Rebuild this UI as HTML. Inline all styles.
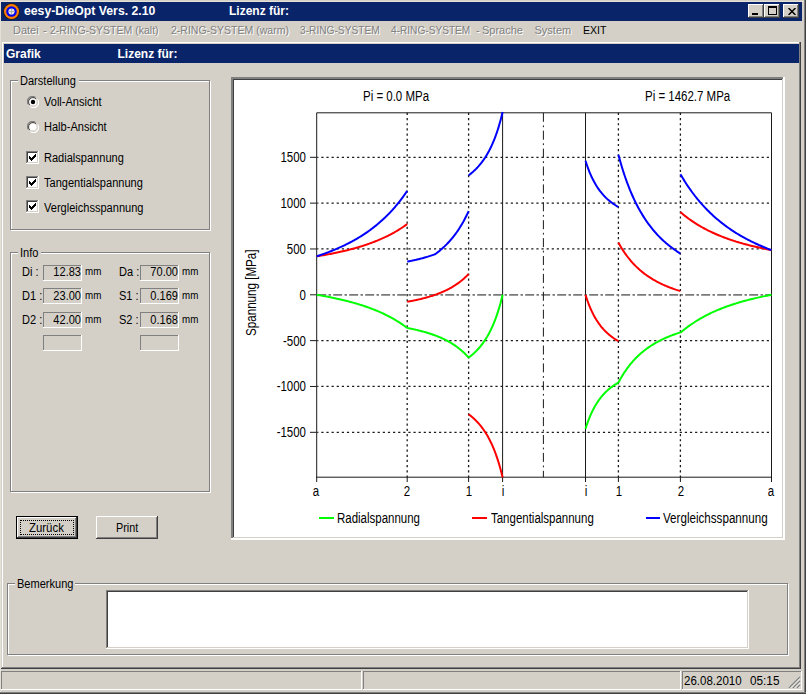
<!DOCTYPE html>
<html><head><meta charset="utf-8"><style>
html,body{margin:0;padding:0;width:806px;height:694px;overflow:hidden;background:#D4D0C8}
body>div,body>svg{position:absolute}
div{white-space:pre;font-family:"Liberation Sans",sans-serif;}
</style></head><body>
<div style="left:0px;top:0px;width:806px;height:694px;background:#D4D0C8;"></div>
<div style="left:0px;top:0px;width:1px;height:694px;background:#E4E1D8;"></div>
<div style="left:0px;top:1px;width:806px;height:1px;background:#E4E1D8;"></div>
<div style="left:804px;top:0px;width:1px;height:694px;background:#808080;"></div>
<div style="left:805px;top:0px;width:1px;height:694px;background:#404040;"></div>
<div style="left:0px;top:692px;width:806px;height:1px;background:#808080;"></div>
<div style="left:0px;top:693px;width:806px;height:1px;background:#404040;"></div>
<div style="left:1px;top:2px;width:801px;height:19px;background:#0A246A;"></div>
<svg style="left:2.5px;top:2.8px;width:17px;height:17px" viewBox="0 0 17 17"><circle cx="8.5" cy="8.5" r="8.2" fill="#2a1a00"/><circle cx="8.5" cy="8.5" r="7.5" fill="#FF8000"/><circle cx="8.5" cy="8.5" r="5.3" fill="#0000F0"/><circle cx="8.5" cy="8.5" r="3.1" fill="#E6E6E6"/><path d="M8.5 6v5M6 8.5h5" stroke="#A8A8A8" stroke-width="0.9"/></svg>
<div style="left:24px;top:5.34px;font-size:12px;line-height:12px;font-weight:bold;color:#fff;transform:scaleX(1.02);transform-origin:0 0;">eesy-DieOpt Vers. 2.10</div>
<div style="left:229px;top:5.34px;font-size:12px;line-height:12px;font-weight:bold;color:#fff;">Lizenz für:</div>
<div style="left:748px;top:4px;width:16px;height:14px;background:#D4D0C8;"></div>
<div style="left:748px;top:4px;width:16px;height:14px;background:#404040;"></div>
<div style="left:748px;top:4px;width:15px;height:13px;background:#FFFFFF;"></div>
<div style="left:749px;top:5px;width:14px;height:12px;background:#808080;"></div>
<div style="left:749px;top:5px;width:13px;height:11px;background:#D4D0C8;"></div>
<div style="left:764px;top:4px;width:16px;height:14px;background:#D4D0C8;"></div>
<div style="left:764px;top:4px;width:16px;height:14px;background:#404040;"></div>
<div style="left:764px;top:4px;width:15px;height:13px;background:#FFFFFF;"></div>
<div style="left:765px;top:5px;width:14px;height:12px;background:#808080;"></div>
<div style="left:765px;top:5px;width:13px;height:11px;background:#D4D0C8;"></div>
<div style="left:783px;top:4px;width:16px;height:14px;background:#D4D0C8;"></div>
<div style="left:783px;top:4px;width:16px;height:14px;background:#404040;"></div>
<div style="left:783px;top:4px;width:15px;height:13px;background:#FFFFFF;"></div>
<div style="left:784px;top:5px;width:14px;height:12px;background:#808080;"></div>
<div style="left:784px;top:5px;width:13px;height:11px;background:#D4D0C8;"></div>
<div style="left:752px;top:13px;width:6px;height:2px;background:#000"></div>
<div style="left:768px;top:6px;width:9px;height:9px;border:1px solid #000;border-top-width:2px;box-sizing:border-box"></div>
<svg style="left:788px;top:8px;width:8px;height:7px" viewBox="0 0 8 7"><path d="M0.5 0 L7.5 7 M7.5 0 L0.5 7" stroke="#000" stroke-width="1.5"/></svg>
<div style="left:14px;top:26.19px;font-size:11px;line-height:11px;color:#FFFFFF;">Datei</div>
<div style="left:13px;top:25.19px;font-size:11px;line-height:11px;color:#808080;">Datei</div>
<div style="left:44px;top:26.19px;font-size:11px;line-height:11px;color:#FFFFFF;">-</div>
<div style="left:43px;top:25.19px;font-size:11px;line-height:11px;color:#808080;">-</div>
<div style="left:50.5px;top:26.19px;font-size:11px;line-height:11px;color:#FFFFFF;transform:scaleX(0.955);transform-origin:0 0;">2-RING-SYSTEM (kalt)</div>
<div style="left:49.5px;top:25.19px;font-size:11px;line-height:11px;color:#808080;transform:scaleX(0.955);transform-origin:0 0;">2-RING-SYSTEM (kalt)</div>
<div style="left:171.5px;top:26.19px;font-size:11px;line-height:11px;color:#FFFFFF;transform:scaleX(0.955);transform-origin:0 0;">2-RING-SYSTEM (warm)</div>
<div style="left:170.5px;top:25.19px;font-size:11px;line-height:11px;color:#808080;transform:scaleX(0.955);transform-origin:0 0;">2-RING-SYSTEM (warm)</div>
<div style="left:300.5px;top:26.19px;font-size:11px;line-height:11px;color:#FFFFFF;transform:scaleX(0.925);transform-origin:0 0;">3-RING-SYSTEM</div>
<div style="left:299.5px;top:25.19px;font-size:11px;line-height:11px;color:#808080;transform:scaleX(0.925);transform-origin:0 0;">3-RING-SYSTEM</div>
<div style="left:392px;top:26.19px;font-size:11px;line-height:11px;color:#FFFFFF;transform:scaleX(0.92);transform-origin:0 0;">4-RING-SYSTEM</div>
<div style="left:391px;top:25.19px;font-size:11px;line-height:11px;color:#808080;transform:scaleX(0.92);transform-origin:0 0;">4-RING-SYSTEM</div>
<div style="left:477px;top:26.19px;font-size:11px;line-height:11px;color:#FFFFFF;">-</div>
<div style="left:476px;top:25.19px;font-size:11px;line-height:11px;color:#808080;">-</div>
<div style="left:483px;top:26.19px;font-size:11px;line-height:11px;color:#FFFFFF;">Sprache</div>
<div style="left:482px;top:25.19px;font-size:11px;line-height:11px;color:#808080;">Sprache</div>
<div style="left:535.5px;top:26.19px;font-size:11px;line-height:11px;color:#FFFFFF;">System</div>
<div style="left:534.5px;top:25.19px;font-size:11px;line-height:11px;color:#808080;">System</div>
<div style="left:583px;top:25.19px;font-size:11px;line-height:11px;color:#000;transform:scaleX(0.96);transform-origin:0 0;">EXIT</div>
<div style="left:2px;top:42px;width:798px;height:1px;background:#FFFFFF;"></div>
<div style="left:2px;top:42px;width:1px;height:626px;background:#FFFFFF;"></div>
<div style="left:799px;top:42px;width:1px;height:626px;background:#808080;"></div>
<div style="left:800px;top:42px;width:1px;height:627px;background:#404040;"></div>
<div style="left:2px;top:667px;width:798px;height:1px;background:#808080;"></div>
<div style="left:1px;top:668px;width:800px;height:1px;background:#404040;"></div>
<div style="left:4px;top:44px;width:795px;height:19px;background:#0A246A;"></div>
<div style="left:6px;top:47.84px;font-size:12px;line-height:12px;font-weight:bold;color:#fff;">Grafik</div>
<div style="left:117.5px;top:47.84px;font-size:12px;line-height:12px;font-weight:bold;color:#fff;">Lizenz für:</div>
<div style="left:10px;top:80px;width:200px;height:150px;background:transparent;border:1px solid #808080;box-sizing:border-box;"></div>
<div style="left:11px;top:81px;width:200px;height:150px;background:transparent;border:1px solid #FFFFFF;box-sizing:border-box;"></div>
<div style="left:10px;top:80px;width:200px;height:1px;background:#808080;"></div>
<div style="left:10px;top:80px;width:1px;height:150px;background:#808080;"></div>
<div style="left:10px;top:229px;width:200px;height:1px;background:#808080;"></div>
<div style="left:209px;top:80px;width:1px;height:150px;background:#808080;"></div>
<div style="left:18px;top:78px;width:61px;height:5px;background:#D4D0C8;"></div>
<div style="left:20px;top:75.34px;font-size:12px;line-height:12px;color:#000;transform:scaleX(0.92);transform-origin:0 0;">Darstellung</div>
<svg style="left:27px;top:96px;width:12px;height:12px" viewBox="0 0 12 12"><path d="M1.5 8.5 A5 5 0 0 1 8.5 1.5" stroke="#808080" stroke-width="1.2" fill="none"/><path d="M2.8 8.9 A4 4 0 0 1 8.9 2.8" stroke="#404040" stroke-width="1" fill="none"/><path d="M10.5 3.5 A5 5 0 0 1 3.5 10.5" stroke="#fff" stroke-width="1.2" fill="none"/><path d="M9.2 3.1 A4 4 0 0 1 3.1 9.2" stroke="#D4D0C8" stroke-width="1" fill="none"/><circle cx="6" cy="6" r="3.6" fill="#fff"/><circle cx="6" cy="6" r="2.2" fill="#000"/></svg>
<div style="left:44px;top:95.84px;font-size:12px;line-height:12px;color:#000;transform:scaleX(0.92);transform-origin:0 0;">Voll-Ansicht</div>
<svg style="left:27px;top:121px;width:12px;height:12px" viewBox="0 0 12 12"><path d="M1.5 8.5 A5 5 0 0 1 8.5 1.5" stroke="#808080" stroke-width="1.2" fill="none"/><path d="M2.8 8.9 A4 4 0 0 1 8.9 2.8" stroke="#404040" stroke-width="1" fill="none"/><path d="M10.5 3.5 A5 5 0 0 1 3.5 10.5" stroke="#fff" stroke-width="1.2" fill="none"/><path d="M9.2 3.1 A4 4 0 0 1 3.1 9.2" stroke="#D4D0C8" stroke-width="1" fill="none"/><circle cx="6" cy="6" r="3.6" fill="#fff"/></svg>
<div style="left:44px;top:120.84px;font-size:12px;line-height:12px;color:#000;transform:scaleX(0.92);transform-origin:0 0;">Halb-Ansicht</div>
<div style="left:26px;top:151px;width:13px;height:13px;background:#FFFFFF;"></div>
<div style="left:26px;top:151px;width:12px;height:1px;background:#808080;"></div>
<div style="left:26px;top:151px;width:1px;height:12px;background:#808080;"></div>
<div style="left:27px;top:152px;width:10px;height:1px;background:#404040;"></div>
<div style="left:27px;top:152px;width:1px;height:10px;background:#404040;"></div>
<div style="left:27px;top:162px;width:11px;height:1px;background:#D4D0C8;"></div>
<div style="left:37px;top:152px;width:1px;height:11px;background:#D4D0C8;"></div>
<svg style="left:29px;top:154px;width:7px;height:7px" viewBox="0 0 7 7" shape-rendering="crispEdges"><rect x="6" y="0" width="1" height="1"/><rect x="5" y="1" width="1" height="1"/><rect x="6" y="1" width="1" height="1"/><rect x="0" y="2" width="1" height="1"/><rect x="4" y="2" width="1" height="1"/><rect x="5" y="2" width="1" height="1"/><rect x="6" y="2" width="1" height="1"/><rect x="0" y="3" width="1" height="1"/><rect x="1" y="3" width="1" height="1"/><rect x="3" y="3" width="1" height="1"/><rect x="4" y="3" width="1" height="1"/><rect x="5" y="3" width="1" height="1"/><rect x="0" y="4" width="1" height="1"/><rect x="1" y="4" width="1" height="1"/><rect x="2" y="4" width="1" height="1"/><rect x="3" y="4" width="1" height="1"/><rect x="4" y="4" width="1" height="1"/><rect x="1" y="5" width="1" height="1"/><rect x="2" y="5" width="1" height="1"/><rect x="3" y="5" width="1" height="1"/><rect x="2" y="6" width="1" height="1"/></svg>
<div style="left:44px;top:151.84px;font-size:12px;line-height:12px;color:#000;transform:scaleX(0.92);transform-origin:0 0;">Radialspannung</div>
<div style="left:26px;top:176px;width:13px;height:13px;background:#FFFFFF;"></div>
<div style="left:26px;top:176px;width:12px;height:1px;background:#808080;"></div>
<div style="left:26px;top:176px;width:1px;height:12px;background:#808080;"></div>
<div style="left:27px;top:177px;width:10px;height:1px;background:#404040;"></div>
<div style="left:27px;top:177px;width:1px;height:10px;background:#404040;"></div>
<div style="left:27px;top:187px;width:11px;height:1px;background:#D4D0C8;"></div>
<div style="left:37px;top:177px;width:1px;height:11px;background:#D4D0C8;"></div>
<svg style="left:29px;top:179px;width:7px;height:7px" viewBox="0 0 7 7" shape-rendering="crispEdges"><rect x="6" y="0" width="1" height="1"/><rect x="5" y="1" width="1" height="1"/><rect x="6" y="1" width="1" height="1"/><rect x="0" y="2" width="1" height="1"/><rect x="4" y="2" width="1" height="1"/><rect x="5" y="2" width="1" height="1"/><rect x="6" y="2" width="1" height="1"/><rect x="0" y="3" width="1" height="1"/><rect x="1" y="3" width="1" height="1"/><rect x="3" y="3" width="1" height="1"/><rect x="4" y="3" width="1" height="1"/><rect x="5" y="3" width="1" height="1"/><rect x="0" y="4" width="1" height="1"/><rect x="1" y="4" width="1" height="1"/><rect x="2" y="4" width="1" height="1"/><rect x="3" y="4" width="1" height="1"/><rect x="4" y="4" width="1" height="1"/><rect x="1" y="5" width="1" height="1"/><rect x="2" y="5" width="1" height="1"/><rect x="3" y="5" width="1" height="1"/><rect x="2" y="6" width="1" height="1"/></svg>
<div style="left:44px;top:176.84px;font-size:12px;line-height:12px;color:#000;transform:scaleX(0.92);transform-origin:0 0;">Tangentialspannung</div>
<div style="left:26px;top:200px;width:13px;height:13px;background:#FFFFFF;"></div>
<div style="left:26px;top:200px;width:12px;height:1px;background:#808080;"></div>
<div style="left:26px;top:200px;width:1px;height:12px;background:#808080;"></div>
<div style="left:27px;top:201px;width:10px;height:1px;background:#404040;"></div>
<div style="left:27px;top:201px;width:1px;height:10px;background:#404040;"></div>
<div style="left:27px;top:211px;width:11px;height:1px;background:#D4D0C8;"></div>
<div style="left:37px;top:201px;width:1px;height:11px;background:#D4D0C8;"></div>
<svg style="left:29px;top:203px;width:7px;height:7px" viewBox="0 0 7 7" shape-rendering="crispEdges"><rect x="6" y="0" width="1" height="1"/><rect x="5" y="1" width="1" height="1"/><rect x="6" y="1" width="1" height="1"/><rect x="0" y="2" width="1" height="1"/><rect x="4" y="2" width="1" height="1"/><rect x="5" y="2" width="1" height="1"/><rect x="6" y="2" width="1" height="1"/><rect x="0" y="3" width="1" height="1"/><rect x="1" y="3" width="1" height="1"/><rect x="3" y="3" width="1" height="1"/><rect x="4" y="3" width="1" height="1"/><rect x="5" y="3" width="1" height="1"/><rect x="0" y="4" width="1" height="1"/><rect x="1" y="4" width="1" height="1"/><rect x="2" y="4" width="1" height="1"/><rect x="3" y="4" width="1" height="1"/><rect x="4" y="4" width="1" height="1"/><rect x="1" y="5" width="1" height="1"/><rect x="2" y="5" width="1" height="1"/><rect x="3" y="5" width="1" height="1"/><rect x="2" y="6" width="1" height="1"/></svg>
<div style="left:44px;top:201.84px;font-size:12px;line-height:12px;color:#000;transform:scaleX(0.92);transform-origin:0 0;">Vergleichsspannung</div>
<div style="left:10px;top:252px;width:200px;height:240px;background:transparent;border:1px solid #808080;box-sizing:border-box;"></div>
<div style="left:11px;top:253px;width:200px;height:240px;background:transparent;border:1px solid #FFFFFF;box-sizing:border-box;"></div>
<div style="left:10px;top:252px;width:200px;height:1px;background:#808080;"></div>
<div style="left:10px;top:252px;width:1px;height:240px;background:#808080;"></div>
<div style="left:10px;top:491px;width:200px;height:1px;background:#808080;"></div>
<div style="left:209px;top:252px;width:1px;height:240px;background:#808080;"></div>
<div style="left:18px;top:250px;width:23px;height:5px;background:#D4D0C8;"></div>
<div style="left:20px;top:247.34px;font-size:12px;line-height:12px;color:#000;transform:scaleX(0.92);transform-origin:0 0;">Info</div>
<div style="left:22px;top:265.74px;font-size:12px;line-height:12px;color:#000;transform:scaleX(0.92);transform-origin:0 0;">Di :</div>
<div style="left:43px;top:265px;width:39px;height:1px;background:#808080;"></div>
<div style="left:43px;top:265px;width:1px;height:16px;background:#808080;"></div>
<div style="left:43px;top:280px;width:39px;height:1px;background:#FFFFFF;"></div>
<div style="left:81px;top:265px;width:1px;height:16px;background:#FFFFFF;"></div>
<div style="left:-219px;width:300px;text-align:right;top:265.74px;font-size:12px;line-height:12px;color:#000;transform:scaleX(0.92);transform-origin:100% 0">12.83</div>
<div style="left:84.5px;top:266.17px;font-size:11.5px;line-height:11.5px;color:#000;transform:scaleX(0.85);transform-origin:0 0;">mm</div>
<div style="left:118.5px;top:265.74px;font-size:12px;line-height:12px;color:#000;transform:scaleX(0.92);transform-origin:0 0;">Da :</div>
<div style="left:140px;top:265px;width:39px;height:1px;background:#808080;"></div>
<div style="left:140px;top:265px;width:1px;height:16px;background:#808080;"></div>
<div style="left:140px;top:280px;width:39px;height:1px;background:#FFFFFF;"></div>
<div style="left:178px;top:265px;width:1px;height:16px;background:#FFFFFF;"></div>
<div style="left:-122px;width:300px;text-align:right;top:265.74px;font-size:12px;line-height:12px;color:#000;transform:scaleX(0.92);transform-origin:100% 0">70.00</div>
<div style="left:182px;top:266.17px;font-size:11.5px;line-height:11.5px;color:#000;transform:scaleX(0.85);transform-origin:0 0;">mm</div>
<div style="left:22px;top:290.04px;font-size:12px;line-height:12px;color:#000;transform:scaleX(0.92);transform-origin:0 0;">D1 :</div>
<div style="left:43px;top:288px;width:39px;height:1px;background:#808080;"></div>
<div style="left:43px;top:288px;width:1px;height:16px;background:#808080;"></div>
<div style="left:43px;top:303px;width:39px;height:1px;background:#FFFFFF;"></div>
<div style="left:81px;top:288px;width:1px;height:16px;background:#FFFFFF;"></div>
<div style="left:-219px;width:300px;text-align:right;top:290.04px;font-size:12px;line-height:12px;color:#000;transform:scaleX(0.92);transform-origin:100% 0">23.00</div>
<div style="left:84.5px;top:290.47px;font-size:11.5px;line-height:11.5px;color:#000;transform:scaleX(0.85);transform-origin:0 0;">mm</div>
<div style="left:118.5px;top:290.04px;font-size:12px;line-height:12px;color:#000;transform:scaleX(0.92);transform-origin:0 0;">S1 :</div>
<div style="left:140px;top:288px;width:39px;height:1px;background:#808080;"></div>
<div style="left:140px;top:288px;width:1px;height:16px;background:#808080;"></div>
<div style="left:140px;top:303px;width:39px;height:1px;background:#FFFFFF;"></div>
<div style="left:178px;top:288px;width:1px;height:16px;background:#FFFFFF;"></div>
<div style="left:-122px;width:300px;text-align:right;top:290.04px;font-size:12px;line-height:12px;color:#000;transform:scaleX(0.92);transform-origin:100% 0">0.169</div>
<div style="left:182px;top:290.47px;font-size:11.5px;line-height:11.5px;color:#000;transform:scaleX(0.85);transform-origin:0 0;">mm</div>
<div style="left:22px;top:313.64px;font-size:12px;line-height:12px;color:#000;transform:scaleX(0.92);transform-origin:0 0;">D2 :</div>
<div style="left:43px;top:312px;width:39px;height:1px;background:#808080;"></div>
<div style="left:43px;top:312px;width:1px;height:16px;background:#808080;"></div>
<div style="left:43px;top:327px;width:39px;height:1px;background:#FFFFFF;"></div>
<div style="left:81px;top:312px;width:1px;height:16px;background:#FFFFFF;"></div>
<div style="left:-219px;width:300px;text-align:right;top:313.64px;font-size:12px;line-height:12px;color:#000;transform:scaleX(0.92);transform-origin:100% 0">42.00</div>
<div style="left:84.5px;top:314.07px;font-size:11.5px;line-height:11.5px;color:#000;transform:scaleX(0.85);transform-origin:0 0;">mm</div>
<div style="left:118.5px;top:313.64px;font-size:12px;line-height:12px;color:#000;transform:scaleX(0.92);transform-origin:0 0;">S2 :</div>
<div style="left:140px;top:312px;width:39px;height:1px;background:#808080;"></div>
<div style="left:140px;top:312px;width:1px;height:16px;background:#808080;"></div>
<div style="left:140px;top:327px;width:39px;height:1px;background:#FFFFFF;"></div>
<div style="left:178px;top:312px;width:1px;height:16px;background:#FFFFFF;"></div>
<div style="left:-122px;width:300px;text-align:right;top:313.64px;font-size:12px;line-height:12px;color:#000;transform:scaleX(0.92);transform-origin:100% 0">0.168</div>
<div style="left:182px;top:314.07px;font-size:11.5px;line-height:11.5px;color:#000;transform:scaleX(0.85);transform-origin:0 0;">mm</div>
<div style="left:43px;top:335px;width:39px;height:1px;background:#808080;"></div>
<div style="left:43px;top:335px;width:1px;height:16px;background:#808080;"></div>
<div style="left:43px;top:350px;width:39px;height:1px;background:#FFFFFF;"></div>
<div style="left:81px;top:335px;width:1px;height:16px;background:#FFFFFF;"></div>
<div style="left:140px;top:335px;width:39px;height:1px;background:#808080;"></div>
<div style="left:140px;top:335px;width:1px;height:16px;background:#808080;"></div>
<div style="left:140px;top:350px;width:39px;height:1px;background:#FFFFFF;"></div>
<div style="left:178px;top:335px;width:1px;height:16px;background:#FFFFFF;"></div>
<div style="left:16px;top:516px;width:62px;height:23px;background:#D4D0C8;"></div>
<div style="left:16px;top:516px;width:62px;height:23px;background:#000;"></div>
<div style="left:17px;top:517px;width:60px;height:21px;background:#404040;"></div>
<div style="left:17px;top:517px;width:59px;height:20px;background:#FFFFFF;"></div>
<div style="left:18px;top:518px;width:58px;height:19px;background:#808080;"></div>
<div style="left:18px;top:518px;width:57px;height:18px;background:#D4D0C8;"></div>
<div style="left:20px;top:520px;width:54px;height:15px;border:1px dotted #000;box-sizing:border-box"></div>
<div style="left:29px;top:521.54px;font-size:12px;line-height:12px;color:#000;transform:scaleX(0.95);transform-origin:0 0;">Zurück</div>
<div style="left:96px;top:516px;width:62px;height:23px;background:#D4D0C8;"></div>
<div style="left:96px;top:516px;width:62px;height:23px;background:#404040;"></div>
<div style="left:96px;top:516px;width:61px;height:22px;background:#FFFFFF;"></div>
<div style="left:97px;top:517px;width:60px;height:21px;background:#808080;"></div>
<div style="left:97px;top:517px;width:59px;height:20px;background:#D4D0C8;"></div>
<div style="left:116.3px;top:521.54px;font-size:12px;line-height:12px;color:#000;transform:scaleX(0.9);transform-origin:0 0;">Print</div>
<div style="left:7px;top:583px;width:781px;height:72px;background:transparent;border:1px solid #808080;box-sizing:border-box;"></div>
<div style="left:8px;top:584px;width:781px;height:72px;background:transparent;border:1px solid #FFFFFF;box-sizing:border-box;"></div>
<div style="left:7px;top:583px;width:781px;height:1px;background:#808080;"></div>
<div style="left:7px;top:583px;width:1px;height:72px;background:#808080;"></div>
<div style="left:7px;top:654px;width:781px;height:1px;background:#808080;"></div>
<div style="left:787px;top:583px;width:1px;height:72px;background:#808080;"></div>
<div style="left:15px;top:581px;width:60px;height:5px;background:#D4D0C8;"></div>
<div style="left:17px;top:577.64px;font-size:12px;line-height:12px;color:#000;transform:scaleX(0.92);transform-origin:0 0;">Bemerkung</div>
<div style="left:106px;top:590px;width:643px;height:59px;background:#FFFFFF;"></div>
<div style="left:106px;top:590px;width:643px;height:1px;background:#808080;"></div>
<div style="left:106px;top:590px;width:1px;height:59px;background:#808080;"></div>
<div style="left:106px;top:648px;width:643px;height:1px;background:#FFFFFF;"></div>
<div style="left:748px;top:590px;width:1px;height:59px;background:#FFFFFF;"></div>
<div style="left:107px;top:591px;width:641px;height:1px;background:#404040;"></div>
<div style="left:107px;top:591px;width:1px;height:57px;background:#404040;"></div>
<div style="left:107px;top:647px;width:641px;height:1px;background:#D4D0C8;"></div>
<div style="left:747px;top:591px;width:1px;height:57px;background:#D4D0C8;"></div>
<div style="left:1px;top:671px;width:361px;height:1px;background:#808080;"></div>
<div style="left:1px;top:671px;width:1px;height:19px;background:#808080;"></div>
<div style="left:1px;top:689px;width:361px;height:1px;background:#FFFFFF;"></div>
<div style="left:361px;top:671px;width:1px;height:19px;background:#FFFFFF;"></div>
<div style="left:363px;top:671px;width:318px;height:1px;background:#808080;"></div>
<div style="left:363px;top:671px;width:1px;height:19px;background:#808080;"></div>
<div style="left:363px;top:689px;width:318px;height:1px;background:#FFFFFF;"></div>
<div style="left:680px;top:671px;width:1px;height:19px;background:#FFFFFF;"></div>
<div style="left:682px;top:671px;width:120px;height:1px;background:#808080;"></div>
<div style="left:682px;top:671px;width:1px;height:19px;background:#808080;"></div>
<div style="left:682px;top:689px;width:120px;height:1px;background:#FFFFFF;"></div>
<div style="left:801px;top:671px;width:1px;height:19px;background:#FFFFFF;"></div>
<div style="left:683.5px;top:675.04px;font-size:12px;line-height:12px;color:#000;transform:scaleX(0.96);transform-origin:0 0;">26.08.2010</div>
<div style="left:749.5px;top:675.04px;font-size:12px;line-height:12px;color:#000;transform:scaleX(0.98);transform-origin:0 0;">05:15</div>
<svg style="left:788px;top:676px;width:13px;height:13px" viewBox="0 0 13 13"><path d="M12 1 L1 12 M12 5 L5 12 M12 9 L9 12" stroke="#808080" stroke-width="1.4"/><path d="M12.5 2 L2 12.5 M12.5 6 L6 12.5 M12.5 10 L10 12.5" stroke="#fff" stroke-width="0.8"/></svg>
<div style="left:231px;top:77px;width:554px;height:463px;background:#FFFFFF;"></div>
<div style="left:231px;top:77px;width:554px;height:2px;background:#808080;"></div>
<div style="left:231px;top:77px;width:2px;height:463px;background:#808080;"></div>
<div style="left:231px;top:538px;width:554px;height:2px;background:#FFFFFF;"></div>
<div style="left:783px;top:77px;width:2px;height:463px;background:#FFFFFF;"></div>
<div style="left:232px;top:538px;width:553px;height:1px;background:#FFFFFF;"></div>
<div style="left:233px;top:79px;width:550px;height:1px;background:#404040;"></div>
<div style="left:233px;top:79px;width:1px;height:459px;background:#404040;"></div>
<div style="left:233px;top:537px;width:550px;height:1px;background:#D4D0C8;"></div>
<div style="left:782px;top:79px;width:1px;height:459px;background:#D4D0C8;"></div>
<svg style="left:0;top:0;width:806px;height:694px" viewBox="0 0 806 694">
<g stroke="#1a1a1a" stroke-width="1" fill="none">
<path d="M317.2 157.30H771" stroke-width="1.3" stroke-dasharray="2.2 2.92" stroke-dashoffset="1"/>
<path d="M310 157.30H316.7"/>
<path d="M317.2 203.13H771" stroke-width="1.3" stroke-dasharray="2.2 2.92" stroke-dashoffset="1"/>
<path d="M310 203.13H316.7"/>
<path d="M317.2 248.97H771" stroke-width="1.3" stroke-dasharray="2.2 2.92" stroke-dashoffset="1"/>
<path d="M310 248.97H316.7"/>
<path d="M317.2 340.63H771" stroke-width="1.3" stroke-dasharray="2.2 2.92" stroke-dashoffset="1"/>
<path d="M310 340.63H316.7"/>
<path d="M317.2 386.47H771" stroke-width="1.3" stroke-dasharray="2.2 2.92" stroke-dashoffset="1"/>
<path d="M310 386.47H316.7"/>
<path d="M317.2 432.31H771" stroke-width="1.3" stroke-dasharray="2.2 2.92" stroke-dashoffset="1"/>
<path d="M310 432.31H316.7"/>
<path d="M407.2 112.8V477.2" stroke-width="1.3" stroke-dasharray="2.2 2.98"/>
<path d="M407.2 477.2V482"/>
<path d="M468.6 112.8V477.2" stroke-width="1.3" stroke-dasharray="2.2 2.98"/>
<path d="M468.6 477.2V482"/>
<path d="M618.4 112.8V477.2" stroke-width="1.3" stroke-dasharray="2.2 2.98"/>
<path d="M618.4 477.2V482"/>
<path d="M680.4 112.8V477.2" stroke-width="1.3" stroke-dasharray="2.2 2.98"/>
<path d="M680.4 477.2V482"/>
<path d="M317.2 294.80H771" stroke="#7a7a7a" stroke-width="1.8" stroke-dasharray="9 2.3 2.5 2.2"/>
<path d="M310 294.80H316.7"/>
<path d="M543.4 112.8V477.2" stroke-dasharray="9 3.6 1.8 3.5"/>
<path d="M316.7 482V112.8H771.5V482M316.2 477.2H772"/>
<path d="M502.6 112.8V482M585.5 112.8V482"/>
</g>
<path d="M502.60 294.80 L502.18 296.58 L501.75 298.31 L501.33 299.99 L500.90 301.62 L500.48 303.20 L500.05 304.74 L499.62 306.24 L499.20 307.70 L498.78 309.12 L498.35 310.50 L497.93 311.84 L497.50 313.15 L497.08 314.42 L496.65 315.66 L496.23 316.87 L495.80 318.04 L495.38 319.19 L494.95 320.31 L494.53 321.40 L494.10 322.46 L493.68 323.50 L493.25 324.51 L492.83 325.50 L492.40 326.46 L491.98 327.40 L491.55 328.32 L491.12 329.22 L490.70 330.10 L490.28 330.95 L489.85 331.79 L489.43 332.61 L489.00 333.41 L488.58 334.19 L488.15 334.95 L487.73 335.70 L487.30 336.43 L486.88 337.15 L486.45 337.85 L486.03 338.53 L485.60 339.21 L485.18 339.86 L484.75 340.50 L484.33 341.13 L483.90 341.75 L483.48 342.35 L483.05 342.95 L482.62 343.53 L482.20 344.09 L481.78 344.65 L481.35 345.20 L480.93 345.73 L480.50 346.26 L480.08 346.77 L479.65 347.27 L479.23 347.77 L478.80 348.25 L478.38 348.73 L477.95 349.20 L477.53 349.66 L477.10 350.10 L476.68 350.55 L476.25 350.98 L475.83 351.41 L475.40 351.82 L474.98 352.23 L474.55 352.64 L474.12 353.03 L473.70 353.42 L473.28 353.80 L472.85 354.18 L472.43 354.55 L472.00 354.91 L471.58 355.26 L471.15 355.61 L470.73 355.96 L470.30 356.30 L469.88 356.63 L469.45 356.96 L469.03 357.28 L468.60 357.59" stroke="#00FF00" stroke-width="2" fill="none" stroke-linejoin="round"/>
<path d="M468.60 357.59 L467.83 356.73 L467.06 355.90 L466.30 355.09 L465.53 354.31 L464.76 353.54 L464.00 352.80 L463.23 352.08 L462.46 351.39 L461.69 350.71 L460.93 350.05 L460.16 349.41 L459.39 348.78 L458.62 348.18 L457.86 347.59 L457.09 347.01 L456.32 346.45 L455.55 345.91 L454.79 345.38 L454.02 344.86 L453.25 344.35 L452.48 343.86 L451.72 343.39 L450.95 342.92 L450.18 342.46 L449.41 342.02 L448.64 341.59 L447.88 341.16 L447.11 340.75 L446.34 340.35 L445.57 339.95 L444.81 339.57 L444.04 339.19 L443.27 338.83 L442.50 338.47 L441.74 338.12 L440.97 337.78 L440.20 337.44 L439.44 337.12 L438.67 336.80 L437.90 336.48 L437.13 336.18 L436.37 335.88 L435.60 335.58 L434.83 335.30 L434.06 335.02 L433.30 334.74 L432.53 334.47 L431.76 334.21 L430.99 333.95 L430.23 333.70 L429.46 333.45 L428.69 333.21 L427.92 332.97 L427.15 332.73 L426.39 332.50 L425.62 332.28 L424.85 332.06 L424.08 331.84 L423.32 331.63 L422.55 331.43 L421.78 331.22 L421.01 331.02 L420.25 330.83 L419.48 330.63 L418.71 330.44 L417.94 330.26 L417.18 330.08 L416.41 329.90 L415.64 329.72 L414.88 329.55 L414.11 329.38 L413.34 329.21 L412.57 329.05 L411.81 328.89 L411.04 328.73 L410.27 328.58 L409.50 328.43 L408.74 328.28 L407.97 328.13 L407.20 327.98" stroke="#00FF00" stroke-width="2" fill="none" stroke-linejoin="round"/>
<path d="M407.20 327.98 L406.07 327.13 L404.94 326.30 L403.81 325.49 L402.68 324.69 L401.54 323.92 L400.41 323.16 L399.28 322.43 L398.15 321.71 L397.02 321.00 L395.89 320.31 L394.76 319.64 L393.62 318.99 L392.49 318.34 L391.36 317.72 L390.23 317.10 L389.10 316.50 L387.97 315.91 L386.84 315.34 L385.71 314.78 L384.57 314.23 L383.44 313.69 L382.31 313.16 L381.18 312.65 L380.05 312.14 L378.92 311.65 L377.79 311.16 L376.66 310.69 L375.52 310.22 L374.39 309.77 L373.26 309.32 L372.13 308.88 L371.00 308.45 L369.87 308.03 L368.74 307.62 L367.61 307.21 L366.47 306.81 L365.34 306.43 L364.21 306.04 L363.08 305.67 L361.95 305.30 L360.82 304.94 L359.69 304.58 L358.56 304.24 L357.43 303.89 L356.29 303.56 L355.16 303.23 L354.03 302.91 L352.90 302.59 L351.77 302.28 L350.64 301.97 L349.51 301.67 L348.38 301.37 L347.24 301.08 L346.11 300.80 L344.98 300.51 L343.85 300.24 L342.72 299.97 L341.59 299.70 L340.46 299.44 L339.32 299.18 L338.19 298.92 L337.06 298.67 L335.93 298.43 L334.80 298.19 L333.67 297.95 L332.54 297.72 L331.41 297.49 L330.27 297.26 L329.14 297.04 L328.01 296.82 L326.88 296.60 L325.75 296.39 L324.62 296.18 L323.49 295.97 L322.36 295.77 L321.23 295.57 L320.09 295.37 L318.96 295.18 L317.83 294.99 L316.70 294.80" stroke="#00FF00" stroke-width="2" fill="none" stroke-linejoin="round"/>
<path d="M502.60 477.59 L502.18 475.79 L501.75 474.05 L501.33 472.36 L500.90 470.71 L500.48 469.11 L500.05 467.56 L499.62 466.05 L499.20 464.58 L498.78 463.15 L498.35 461.76 L497.93 460.40 L497.50 459.08 L497.08 457.80 L496.65 456.55 L496.23 455.33 L495.80 454.14 L495.38 452.99 L494.95 451.86 L494.53 450.76 L494.10 449.69 L493.68 448.64 L493.25 447.62 L492.83 446.62 L492.40 445.65 L491.98 444.70 L491.55 443.77 L491.12 442.87 L490.70 441.98 L490.28 441.12 L489.85 440.28 L489.43 439.45 L489.00 438.64 L488.58 437.85 L488.15 437.08 L487.73 436.33 L487.30 435.59 L486.88 434.87 L486.45 434.16 L486.03 433.47 L485.60 432.80 L485.18 432.13 L484.75 431.48 L484.33 430.85 L483.90 430.23 L483.48 429.62 L483.05 429.02 L482.62 428.44 L482.20 427.86 L481.78 427.30 L481.35 426.75 L480.93 426.21 L480.50 425.68 L480.08 425.17 L479.65 424.66 L479.23 424.16 L478.80 423.67 L478.38 423.19 L477.95 422.72 L477.53 422.25 L477.10 421.80 L476.68 421.36 L476.25 420.92 L475.83 420.49 L475.40 420.07 L474.98 419.65 L474.55 419.25 L474.12 418.85 L473.70 418.46 L473.28 418.07 L472.85 417.69 L472.43 417.32 L472.00 416.95 L471.58 416.60 L471.15 416.24 L470.73 415.90 L470.30 415.55 L469.88 415.22 L469.45 414.89 L469.03 414.56 L468.60 414.25" stroke="#FF0000" stroke-width="2" fill="none" stroke-linejoin="round"/>
<path d="M468.60 273.99 L467.83 274.80 L467.06 275.58 L466.30 276.34 L465.53 277.08 L464.76 277.79 L464.00 278.49 L463.23 279.16 L462.46 279.81 L461.69 280.45 L460.93 281.07 L460.16 281.67 L459.39 282.26 L458.62 282.83 L457.86 283.38 L457.09 283.92 L456.32 284.44 L455.55 284.96 L454.79 285.45 L454.02 285.94 L453.25 286.41 L452.48 286.87 L451.72 287.32 L450.95 287.76 L450.18 288.18 L449.41 288.60 L448.64 289.01 L447.88 289.40 L447.11 289.79 L446.34 290.17 L445.57 290.54 L444.81 290.90 L444.04 291.25 L443.27 291.59 L442.50 291.93 L441.74 292.26 L440.97 292.58 L440.20 292.89 L439.44 293.20 L438.67 293.50 L437.90 293.79 L437.13 294.08 L436.37 294.36 L435.60 294.64 L434.83 294.91 L434.06 295.17 L433.30 295.43 L432.53 295.68 L431.76 295.93 L430.99 296.17 L430.23 296.41 L429.46 296.64 L428.69 296.87 L427.92 297.09 L427.15 297.31 L426.39 297.53 L425.62 297.74 L424.85 297.94 L424.08 298.15 L423.32 298.34 L422.55 298.54 L421.78 298.73 L421.01 298.92 L420.25 299.10 L419.48 299.28 L418.71 299.46 L417.94 299.63 L417.18 299.80 L416.41 299.97 L415.64 300.14 L414.88 300.30 L414.11 300.46 L413.34 300.61 L412.57 300.77 L411.81 300.92 L411.04 301.06 L410.27 301.21 L409.50 301.35 L408.74 301.49 L407.97 301.63 L407.20 301.77" stroke="#FF0000" stroke-width="2" fill="none" stroke-linejoin="round"/>
<path d="M407.20 224.03 L406.07 224.86 L404.94 225.67 L403.81 226.46 L402.68 227.23 L401.54 227.98 L400.41 228.72 L399.28 229.44 L398.15 230.14 L397.02 230.82 L395.89 231.49 L394.76 232.14 L393.62 232.78 L392.49 233.41 L391.36 234.02 L390.23 234.61 L389.10 235.20 L387.97 235.77 L386.84 236.33 L385.71 236.87 L384.57 237.41 L383.44 237.93 L382.31 238.44 L381.18 238.95 L380.05 239.44 L378.92 239.92 L377.79 240.39 L376.66 240.85 L375.52 241.30 L374.39 241.75 L373.26 242.18 L372.13 242.61 L371.00 243.02 L369.87 243.43 L368.74 243.84 L367.61 244.23 L366.47 244.62 L365.34 244.99 L364.21 245.37 L363.08 245.73 L361.95 246.09 L360.82 246.44 L359.69 246.78 L358.56 247.12 L357.43 247.46 L356.29 247.78 L355.16 248.10 L354.03 248.42 L352.90 248.73 L351.77 249.03 L350.64 249.33 L349.51 249.62 L348.38 249.91 L347.24 250.19 L346.11 250.47 L344.98 250.74 L343.85 251.01 L342.72 251.27 L341.59 251.53 L340.46 251.79 L339.32 252.04 L338.19 252.29 L337.06 252.53 L335.93 252.77 L334.80 253.00 L333.67 253.24 L332.54 253.46 L331.41 253.69 L330.27 253.91 L329.14 254.12 L328.01 254.34 L326.88 254.55 L325.75 254.75 L324.62 254.96 L323.49 255.16 L322.36 255.36 L321.23 255.55 L320.09 255.74 L318.96 255.93 L317.83 256.12 L316.70 256.30" stroke="#FF0000" stroke-width="2" fill="none" stroke-linejoin="round"/>
<path d="M502.60 112.01 L502.18 113.81 L501.75 115.55 L501.33 117.24 L500.90 118.89 L500.48 120.49 L500.05 122.04 L499.62 123.55 L499.20 125.02 L498.78 126.45 L498.35 127.84 L497.93 129.20 L497.50 130.52 L497.08 131.80 L496.65 133.05 L496.23 134.27 L495.80 135.46 L495.38 136.61 L494.95 137.74 L494.53 138.84 L494.10 139.91 L493.68 140.96 L493.25 141.98 L492.83 142.98 L492.40 143.95 L491.98 144.90 L491.55 145.83 L491.12 146.73 L490.70 147.62 L490.28 148.48 L489.85 149.32 L489.43 150.15 L489.00 150.96 L488.58 151.75 L488.15 152.52 L487.73 153.27 L487.30 154.01 L486.88 154.73 L486.45 155.44 L486.03 156.13 L485.60 156.80 L485.18 157.47 L484.75 158.12 L484.33 158.75 L483.90 159.37 L483.48 159.98 L483.05 160.58 L482.62 161.16 L482.20 161.74 L481.78 162.30 L481.35 162.85 L480.93 163.39 L480.50 163.92 L480.08 164.43 L479.65 164.94 L479.23 165.44 L478.80 165.93 L478.38 166.41 L477.95 166.88 L477.53 167.35 L477.10 167.80 L476.68 168.24 L476.25 168.68 L475.83 169.11 L475.40 169.53 L474.98 169.95 L474.55 170.35 L474.12 170.75 L473.70 171.14 L473.28 171.53 L472.85 171.91 L472.43 172.28 L472.00 172.65 L471.58 173.00 L471.15 173.36 L470.73 173.70 L470.30 174.05 L469.88 174.38 L469.45 174.71 L469.03 175.04 L468.60 175.35" stroke="#0000FF" stroke-width="2" fill="none" stroke-linejoin="round"/>
<path d="M468.60 211.20 L467.83 212.86 L467.06 214.48 L466.30 216.05 L465.53 217.57 L464.76 219.05 L464.00 220.48 L463.23 221.88 L462.46 223.23 L461.69 224.54 L460.93 225.82 L460.16 227.07 L459.39 228.27 L458.62 229.45 L457.86 230.59 L457.09 231.71 L456.32 232.79 L455.55 233.85 L454.79 234.88 L454.02 235.88 L453.25 236.86 L452.48 237.81 L451.72 238.74 L450.95 239.64 L450.18 240.52 L449.41 241.38 L448.64 242.22 L447.88 243.04 L447.11 243.84 L446.34 244.62 L445.57 245.38 L444.81 246.13 L444.04 246.86 L443.27 247.57 L442.50 248.26 L441.74 248.94 L440.97 249.60 L440.20 250.25 L439.44 250.89 L438.67 251.51 L437.90 252.11 L437.13 252.71 L436.37 253.29 L435.60 253.85 L434.83 254.30 L434.06 254.58 L433.30 254.86 L432.53 255.13 L431.76 255.39 L430.99 255.65 L430.23 255.90 L429.46 256.15 L428.69 256.39 L427.92 256.63 L427.15 256.87 L426.39 257.10 L425.62 257.32 L424.85 257.54 L424.08 257.76 L423.32 257.97 L422.55 258.17 L421.78 258.38 L421.01 258.58 L420.25 258.77 L419.48 258.97 L418.71 259.16 L417.94 259.34 L417.18 259.52 L416.41 259.70 L415.64 259.88 L414.88 260.05 L414.11 260.22 L413.34 260.39 L412.57 260.55 L411.81 260.71 L411.04 260.87 L410.27 261.02 L409.50 261.17 L408.74 261.32 L407.97 261.47 L407.20 261.62" stroke="#0000FF" stroke-width="2" fill="none" stroke-linejoin="round"/>
<path d="M407.20 190.85 L406.07 192.53 L404.94 194.17 L403.81 195.77 L402.68 197.34 L401.54 198.86 L400.41 200.35 L399.28 201.81 L398.15 203.23 L397.02 204.62 L395.89 205.97 L394.76 207.30 L393.62 208.60 L392.49 209.86 L391.36 211.10 L390.23 212.31 L389.10 213.49 L387.97 214.65 L386.84 215.79 L385.71 216.89 L384.57 217.98 L383.44 219.04 L382.31 220.08 L381.18 221.10 L380.05 222.10 L378.92 223.07 L377.79 224.03 L376.66 224.96 L375.52 225.88 L374.39 226.78 L373.26 227.66 L372.13 228.53 L371.00 229.37 L369.87 230.20 L368.74 231.02 L367.61 231.82 L366.47 232.60 L365.34 233.37 L364.21 234.12 L363.08 234.86 L361.95 235.59 L360.82 236.30 L359.69 237.00 L358.56 237.69 L357.43 238.36 L356.29 239.02 L355.16 239.67 L354.03 240.31 L352.90 240.94 L351.77 241.55 L350.64 242.16 L349.51 242.75 L348.38 243.34 L347.24 243.91 L346.11 244.47 L344.98 245.03 L343.85 245.57 L342.72 246.11 L341.59 246.64 L340.46 247.15 L339.32 247.66 L338.19 248.16 L337.06 248.66 L335.93 249.14 L334.80 249.62 L333.67 250.09 L332.54 250.55 L331.41 251.00 L330.27 251.45 L329.14 251.89 L328.01 252.32 L326.88 252.75 L325.75 253.17 L324.62 253.58 L323.49 253.99 L322.36 254.39 L321.23 254.78 L320.09 255.17 L318.96 255.55 L317.83 255.93 L316.70 256.30" stroke="#0000FF" stroke-width="2" fill="none" stroke-linejoin="round"/>
<path d="M585.50 428.89 L585.91 427.57 L586.32 426.30 L586.73 425.06 L587.14 423.86 L587.56 422.69 L587.97 421.56 L588.38 420.46 L588.79 419.38 L589.20 418.34 L589.61 417.32 L590.02 416.33 L590.43 415.37 L590.85 414.43 L591.26 413.52 L591.67 412.63 L592.08 411.76 L592.49 410.92 L592.90 410.09 L593.31 409.29 L593.73 408.51 L594.14 407.74 L594.55 407.00 L594.96 406.27 L595.37 405.56 L595.78 404.86 L596.19 404.19 L596.60 403.53 L597.01 402.88 L597.43 402.25 L597.84 401.63 L598.25 401.03 L598.66 400.44 L599.07 399.86 L599.48 399.30 L599.89 398.75 L600.30 398.21 L600.72 397.68 L601.13 397.17 L601.54 396.66 L601.95 396.17 L602.36 395.68 L602.77 395.21 L603.18 394.75 L603.60 394.29 L604.01 393.85 L604.42 393.41 L604.83 392.99 L605.24 392.57 L605.65 392.16 L606.06 391.75 L606.47 391.36 L606.88 390.97 L607.30 390.60 L607.71 390.22 L608.12 389.86 L608.53 389.50 L608.94 389.15 L609.35 388.81 L609.76 388.47 L610.17 388.14 L610.59 387.81 L611.00 387.49 L611.41 387.18 L611.82 386.87 L612.23 386.57 L612.64 386.27 L613.05 385.98 L613.46 385.69 L613.88 385.41 L614.29 385.14 L614.70 384.87 L615.11 384.60 L615.52 384.34 L615.93 384.08 L616.34 383.82 L616.75 383.58 L617.17 383.33 L617.58 383.09 L617.99 382.85 L618.40 382.62" stroke="#00FF00" stroke-width="2" fill="none" stroke-linejoin="round"/>
<path d="M618.40 382.62 L619.17 381.16 L619.95 379.75 L620.73 378.37 L621.50 377.04 L622.27 375.75 L623.05 374.49 L623.82 373.27 L624.60 372.09 L625.38 370.94 L626.15 369.82 L626.92 368.73 L627.70 367.67 L628.48 366.64 L629.25 365.64 L630.02 364.66 L630.80 363.71 L631.57 362.79 L632.35 361.89 L633.12 361.01 L633.90 360.16 L634.67 359.33 L635.45 358.51 L636.23 357.72 L637.00 356.95 L637.77 356.20 L638.55 355.46 L639.32 354.74 L640.10 354.04 L640.88 353.36 L641.65 352.69 L642.42 352.04 L643.20 351.40 L643.98 350.78 L644.75 350.17 L645.52 349.58 L646.30 349.00 L647.07 348.43 L647.85 347.88 L648.62 347.33 L649.40 346.80 L650.17 346.28 L650.95 345.78 L651.73 345.28 L652.50 344.79 L653.27 344.31 L654.05 343.85 L654.82 343.39 L655.60 342.94 L656.38 342.50 L657.15 342.08 L657.92 341.65 L658.70 341.24 L659.48 340.84 L660.25 340.44 L661.02 340.05 L661.80 339.67 L662.57 339.30 L663.35 338.93 L664.12 338.57 L664.90 338.22 L665.67 337.88 L666.45 337.54 L667.23 337.21 L668.00 336.88 L668.77 336.56 L669.55 336.24 L670.32 335.93 L671.10 335.63 L671.88 335.33 L672.65 335.04 L673.42 334.75 L674.20 334.47 L674.98 334.19 L675.75 333.92 L676.52 333.66 L677.30 333.39 L678.07 333.13 L678.85 332.88 L679.62 332.63 L680.40 332.38" stroke="#00FF00" stroke-width="2" fill="none" stroke-linejoin="round"/>
<path d="M680.40 332.75 L681.54 331.78 L682.68 330.82 L683.82 329.89 L684.95 328.99 L686.09 328.10 L687.23 327.24 L688.37 326.39 L689.51 325.57 L690.65 324.77 L691.79 323.98 L692.93 323.21 L694.06 322.46 L695.20 321.73 L696.34 321.01 L697.48 320.31 L698.62 319.62 L699.76 318.95 L700.90 318.29 L702.04 317.65 L703.17 317.02 L704.31 316.40 L705.45 315.80 L706.59 315.21 L707.73 314.63 L708.87 314.07 L710.01 313.51 L711.15 312.97 L712.28 312.44 L713.42 311.91 L714.56 311.40 L715.70 310.90 L716.84 310.41 L717.98 309.93 L719.12 309.46 L720.26 308.99 L721.39 308.54 L722.53 308.09 L723.67 307.66 L724.81 307.23 L725.95 306.81 L727.09 306.39 L728.23 305.99 L729.37 305.59 L730.50 305.20 L731.64 304.82 L732.78 304.44 L733.92 304.07 L735.06 303.71 L736.20 303.35 L737.34 303.00 L738.48 302.65 L739.62 302.32 L740.75 301.98 L741.89 301.66 L743.03 301.33 L744.17 301.02 L745.31 300.71 L746.45 300.40 L747.59 300.10 L748.73 299.81 L749.86 299.52 L751.00 299.23 L752.14 298.95 L753.28 298.67 L754.42 298.40 L755.56 298.13 L756.70 297.87 L757.84 297.61 L758.97 297.36 L760.11 297.11 L761.25 296.86 L762.39 296.62 L763.53 296.38 L764.67 296.14 L765.81 295.91 L766.94 295.68 L768.08 295.46 L769.22 295.23 L770.36 295.02 L771.50 294.80" stroke="#00FF00" stroke-width="2" fill="none" stroke-linejoin="round"/>
<path d="M585.50 294.80 L585.91 296.11 L586.32 297.39 L586.73 298.62 L587.14 299.83 L587.56 300.99 L587.97 302.13 L588.38 303.24 L588.79 304.31 L589.20 305.35 L589.61 306.37 L590.02 307.36 L590.43 308.32 L590.85 309.26 L591.26 310.18 L591.67 311.07 L592.08 311.93 L592.49 312.78 L592.90 313.60 L593.31 314.41 L593.73 315.19 L594.14 315.96 L594.55 316.70 L594.96 317.43 L595.37 318.14 L595.78 318.84 L596.19 319.51 L596.60 320.18 L597.01 320.82 L597.43 321.45 L597.84 322.07 L598.25 322.67 L598.66 323.26 L599.07 323.84 L599.48 324.40 L599.89 324.95 L600.30 325.49 L600.72 326.02 L601.13 326.54 L601.54 327.04 L601.95 327.54 L602.36 328.02 L602.77 328.49 L603.18 328.96 L603.60 329.41 L604.01 329.86 L604.42 330.29 L604.83 330.72 L605.24 331.14 L605.65 331.55 L606.06 331.95 L606.47 332.35 L606.88 332.73 L607.30 333.11 L607.71 333.49 L608.12 333.85 L608.53 334.21 L608.94 334.56 L609.35 334.90 L609.76 335.24 L610.17 335.57 L610.59 335.90 L611.00 336.22 L611.41 336.53 L611.82 336.84 L612.23 337.14 L612.64 337.44 L613.05 337.73 L613.46 338.02 L613.88 338.30 L614.29 338.57 L614.70 338.85 L615.11 339.11 L615.52 339.38 L615.93 339.63 L616.34 339.89 L616.75 340.14 L617.17 340.38 L617.58 340.62 L617.99 340.86 L618.40 341.09" stroke="#FF0000" stroke-width="2" fill="none" stroke-linejoin="round"/>
<path d="M618.40 242.55 L619.17 243.96 L619.95 245.33 L620.73 246.66 L621.50 247.94 L622.27 249.19 L623.05 250.41 L623.82 251.59 L624.60 252.73 L625.38 253.85 L626.15 254.93 L626.92 255.98 L627.70 257.01 L628.48 258.00 L629.25 258.97 L630.02 259.91 L630.80 260.83 L631.57 261.73 L632.35 262.60 L633.12 263.45 L633.90 264.27 L634.67 265.08 L635.45 265.86 L636.23 266.63 L637.00 267.38 L637.77 268.10 L638.55 268.82 L639.32 269.51 L640.10 270.19 L640.88 270.85 L641.65 271.49 L642.42 272.12 L643.20 272.74 L643.98 273.34 L644.75 273.93 L645.52 274.50 L646.30 275.06 L647.07 275.61 L647.85 276.15 L648.62 276.68 L649.40 277.19 L650.17 277.69 L650.95 278.18 L651.73 278.66 L652.50 279.13 L653.27 279.60 L654.05 280.05 L654.82 280.49 L655.60 280.92 L656.38 281.35 L657.15 281.76 L657.92 282.17 L658.70 282.57 L659.48 282.96 L660.25 283.34 L661.02 283.72 L661.80 284.08 L662.57 284.45 L663.35 284.80 L664.12 285.15 L664.90 285.49 L665.67 285.82 L666.45 286.15 L667.23 286.47 L668.00 286.79 L668.77 287.10 L669.55 287.40 L670.32 287.70 L671.10 287.99 L671.88 288.28 L672.65 288.56 L673.42 288.84 L674.20 289.11 L674.98 289.38 L675.75 289.65 L676.52 289.90 L677.30 290.16 L678.07 290.41 L678.85 290.65 L679.62 290.90 L680.40 291.13" stroke="#FF0000" stroke-width="2" fill="none" stroke-linejoin="round"/>
<path d="M680.40 212.11 L681.54 213.09 L682.68 214.05 L683.82 214.98 L684.95 215.89 L686.09 216.77 L687.23 217.64 L688.37 218.49 L689.51 219.31 L690.65 220.12 L691.79 220.91 L692.93 221.68 L694.06 222.43 L695.20 223.17 L696.34 223.89 L697.48 224.59 L698.62 225.28 L699.76 225.95 L700.90 226.61 L702.04 227.25 L703.17 227.88 L704.31 228.50 L705.45 229.11 L706.59 229.70 L707.73 230.28 L708.87 230.84 L710.01 231.40 L711.15 231.94 L712.28 232.48 L713.42 233.00 L714.56 233.51 L715.70 234.02 L716.84 234.51 L717.98 234.99 L719.12 235.46 L720.26 235.93 L721.39 236.38 L722.53 236.83 L723.67 237.27 L724.81 237.70 L725.95 238.12 L727.09 238.53 L728.23 238.94 L729.37 239.34 L730.50 239.73 L731.64 240.12 L732.78 240.49 L733.92 240.86 L735.06 241.23 L736.20 241.59 L737.34 241.94 L738.48 242.28 L739.62 242.62 L740.75 242.96 L741.89 243.28 L743.03 243.61 L744.17 243.92 L745.31 244.23 L746.45 244.54 L747.59 244.84 L748.73 245.14 L749.86 245.43 L751.00 245.71 L752.14 246.00 L753.28 246.27 L754.42 246.55 L755.56 246.81 L756.70 247.08 L757.84 247.34 L758.97 247.59 L760.11 247.84 L761.25 248.09 L762.39 248.34 L763.53 248.58 L764.67 248.81 L765.81 249.05 L766.94 249.27 L768.08 249.50 L769.22 249.72 L770.36 249.94 L771.50 250.16" stroke="#FF0000" stroke-width="2" fill="none" stroke-linejoin="round"/>
<path d="M585.50 160.71 L585.91 162.03 L586.32 163.30 L586.73 164.54 L587.14 165.74 L587.56 166.91 L587.97 168.04 L588.38 169.14 L588.79 170.22 L589.20 171.26 L589.61 172.28 L590.02 173.27 L590.43 174.23 L590.85 175.17 L591.26 176.08 L591.67 176.97 L592.08 177.84 L592.49 178.68 L592.90 179.51 L593.31 180.31 L593.73 181.09 L594.14 181.86 L594.55 182.60 L594.96 183.33 L595.37 184.04 L595.78 184.74 L596.19 185.41 L596.60 186.07 L597.01 186.72 L597.43 187.35 L597.84 187.97 L598.25 188.57 L598.66 189.16 L599.07 189.74 L599.48 190.30 L599.89 190.85 L600.30 191.39 L600.72 191.92 L601.13 192.43 L601.54 192.94 L601.95 193.43 L602.36 193.92 L602.77 194.39 L603.18 194.85 L603.60 195.31 L604.01 195.75 L604.42 196.19 L604.83 196.61 L605.24 197.03 L605.65 197.44 L606.06 197.85 L606.47 198.24 L606.88 198.63 L607.30 199.00 L607.71 199.38 L608.12 199.74 L608.53 200.10 L608.94 200.45 L609.35 200.79 L609.76 201.13 L610.17 201.46 L610.59 201.79 L611.00 202.11 L611.41 202.42 L611.82 202.73 L612.23 203.03 L612.64 203.33 L613.05 203.62 L613.46 203.91 L613.88 204.19 L614.29 204.46 L614.70 204.73 L615.11 205.00 L615.52 205.26 L615.93 205.52 L616.34 205.78 L616.75 206.02 L617.17 206.27 L617.58 206.51 L617.99 206.75 L618.40 206.98" stroke="#0000FF" stroke-width="2" fill="none" stroke-linejoin="round"/>
<path d="M618.40 154.73 L619.17 157.60 L619.95 160.38 L620.73 163.08 L621.50 165.70 L622.27 168.25 L623.05 170.72 L623.82 173.12 L624.60 175.45 L625.38 177.71 L626.15 179.91 L626.92 182.05 L627.70 184.14 L628.48 186.16 L629.25 188.13 L630.02 190.05 L630.80 191.92 L631.57 193.74 L632.35 195.51 L633.12 197.23 L633.90 198.91 L634.67 200.55 L635.45 202.15 L636.23 203.71 L637.00 205.23 L637.77 206.71 L638.55 208.15 L639.32 209.57 L640.10 210.94 L640.88 212.29 L641.65 213.60 L642.42 214.88 L643.20 216.13 L643.98 217.36 L644.75 218.55 L645.52 219.72 L646.30 220.86 L647.07 221.98 L647.85 223.07 L648.62 224.14 L649.40 225.19 L650.17 226.21 L650.95 227.21 L651.73 228.19 L652.50 229.14 L653.27 230.08 L654.05 231.00 L654.82 231.90 L655.60 232.78 L656.38 233.64 L657.15 234.49 L657.92 235.31 L658.70 236.12 L659.48 236.92 L660.25 237.70 L661.02 238.46 L661.80 239.21 L662.57 239.95 L663.35 240.67 L664.12 241.37 L664.90 242.06 L665.67 242.74 L666.45 243.41 L667.23 244.07 L668.00 244.71 L668.77 245.34 L669.55 245.96 L670.32 246.56 L671.10 247.16 L671.88 247.75 L672.65 248.32 L673.42 248.89 L674.20 249.44 L674.98 249.99 L675.75 250.52 L676.52 251.05 L677.30 251.57 L678.07 252.07 L678.85 252.57 L679.62 253.07 L680.40 253.55" stroke="#0000FF" stroke-width="2" fill="none" stroke-linejoin="round"/>
<path d="M680.40 174.16 L681.54 176.12 L682.68 178.02 L683.82 179.88 L684.95 181.70 L686.09 183.47 L687.23 185.20 L688.37 186.89 L689.51 188.54 L690.65 190.15 L691.79 191.73 L692.93 193.27 L694.06 194.77 L695.20 196.24 L696.34 197.68 L697.48 199.08 L698.62 200.46 L699.76 201.80 L700.90 203.12 L702.04 204.41 L703.17 205.67 L704.31 206.90 L705.45 208.11 L706.59 209.29 L707.73 210.44 L708.87 211.58 L710.01 212.69 L711.15 213.78 L712.28 214.84 L713.42 215.89 L714.56 216.91 L715.70 217.91 L716.84 218.90 L717.98 219.86 L719.12 220.81 L720.26 221.73 L721.39 222.64 L722.53 223.53 L723.67 224.41 L724.81 225.27 L725.95 226.11 L727.09 226.94 L728.23 227.75 L729.37 228.55 L730.50 229.33 L731.64 230.10 L732.78 230.85 L733.92 231.59 L735.06 232.32 L736.20 233.04 L737.34 233.74 L738.48 234.43 L739.62 235.11 L740.75 235.77 L741.89 236.43 L743.03 237.07 L744.17 237.70 L745.31 238.33 L746.45 238.94 L747.59 239.54 L748.73 240.13 L749.86 240.71 L751.00 241.28 L752.14 241.85 L753.28 242.40 L754.42 242.94 L755.56 243.48 L756.70 244.01 L757.84 244.53 L758.97 245.04 L760.11 245.54 L761.25 246.03 L762.39 246.52 L763.53 247.00 L764.67 247.47 L765.81 247.94 L766.94 248.39 L768.08 248.84 L769.22 249.29 L770.36 249.73 L771.50 250.16" stroke="#0000FF" stroke-width="2" fill="none" stroke-linejoin="round"/>
<path d="M319 518H334" stroke="#00FF00" stroke-width="2"/>
<path d="M472 518H487" stroke="#FF0000" stroke-width="2"/>
<path d="M646 518H660" stroke="#0000FF" stroke-width="2"/>
</svg>
<div style="left:105.5px;width:200px;text-align:right;top:150.24px;font-size:14px;line-height:14px;transform:scaleX(0.82);transform-origin:100% 0">1500</div>
<div style="left:105.5px;width:200px;text-align:right;top:196.08px;font-size:14px;line-height:14px;transform:scaleX(0.82);transform-origin:100% 0">1000</div>
<div style="left:105.5px;width:200px;text-align:right;top:241.91px;font-size:14px;line-height:14px;transform:scaleX(0.82);transform-origin:100% 0">500</div>
<div style="left:105.5px;width:200px;text-align:right;top:287.75px;font-size:14px;line-height:14px;transform:scaleX(0.82);transform-origin:100% 0">0</div>
<div style="left:105.5px;width:200px;text-align:right;top:333.58px;font-size:14px;line-height:14px;transform:scaleX(0.82);transform-origin:100% 0">-500</div>
<div style="left:105.5px;width:200px;text-align:right;top:379.42px;font-size:14px;line-height:14px;transform:scaleX(0.82);transform-origin:100% 0">-1000</div>
<div style="left:105.5px;width:200px;text-align:right;top:425.25px;font-size:14px;line-height:14px;transform:scaleX(0.82);transform-origin:100% 0">-1500</div>
<div style="left:215.8px;width:200px;text-align:center;top:483.75px;font-size:14px;line-height:14px;transform:scaleX(0.82);transform-origin:50% 0">a</div>
<div style="left:307.3px;width:200px;text-align:center;top:483.75px;font-size:14px;line-height:14px;transform:scaleX(0.82);transform-origin:50% 0">2</div>
<div style="left:368.8px;width:200px;text-align:center;top:483.75px;font-size:14px;line-height:14px;transform:scaleX(0.82);transform-origin:50% 0">1</div>
<div style="left:402.5px;width:200px;text-align:center;top:483.75px;font-size:14px;line-height:14px;transform:scaleX(0.82);transform-origin:50% 0">i</div>
<div style="left:485.79999999999995px;width:200px;text-align:center;top:483.75px;font-size:14px;line-height:14px;transform:scaleX(0.82);transform-origin:50% 0">i</div>
<div style="left:518.8px;width:200px;text-align:center;top:483.75px;font-size:14px;line-height:14px;transform:scaleX(0.82);transform-origin:50% 0">1</div>
<div style="left:580.5px;width:200px;text-align:center;top:483.75px;font-size:14px;line-height:14px;transform:scaleX(0.82);transform-origin:50% 0">2</div>
<div style="left:671.3px;width:200px;text-align:center;top:483.75px;font-size:14px;line-height:14px;transform:scaleX(0.82);transform-origin:50% 0">a</div>
<div style="left:363px;top:89.15px;font-size:14px;line-height:14px;color:#000;transform:scaleX(0.82);transform-origin:0 0">Pi = 0.0 MPa</div>
<div style="left:644.5px;top:89.15px;font-size:14px;line-height:14px;color:#000;transform:scaleX(0.82);transform-origin:0 0">Pi = 1462.7 MPa</div>
<div style="left:336.8px;top:510.85px;font-size:14px;line-height:14px;color:#000;transform:scaleX(0.82);transform-origin:0 0">Radialspannung</div>
<div style="left:490.8px;top:510.85px;font-size:14px;line-height:14px;color:#000;transform:scaleX(0.82);transform-origin:0 0">Tangentialspannung</div>
<div style="left:663.3px;top:510.85px;font-size:14px;line-height:14px;color:#000;transform:scaleX(0.83);transform-origin:0 0">Vergleichsspannung</div>
<div style="left:243.9px;top:335.8px;font-size:14px;line-height:14px;white-space:nowrap;transform-origin:0 0;transform:rotate(-90deg) scaleX(0.83)">Spannung [MPa]</div>
</body></html>
